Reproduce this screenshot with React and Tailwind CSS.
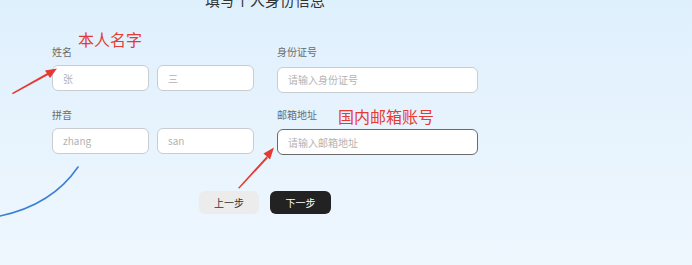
import React from "react";

function Field({ placeholder, focused }) {
  return (
    <input
      readOnly
      placeholder={placeholder}
      className={`h-[26px] w-full min-w-0 rounded-[6px] border bg-white px-[10px] text-[10px] outline-none placeholder:text-[#b3b3b3] ${
        focused ? "border-[#6b6b6b]" : "border-[#c9ccd1]"
      }`}
    />
  );
}

function Label({ children }) {
  return <div className="mb-[7px] text-[10px] leading-[12px] text-[#6b6b6b]">{children}</div>;
}

export default function App() {
  return (
    <div
      className="relative h-[265px] w-[692px] overflow-hidden bg-gradient-to-b from-[#dff0fd] to-[#eff7fe]"
      style={{ fontFamily: '"Noto Sans CJK SC", "Noto Sans", sans-serif' }}
    >
      <div className="ml-[52px] w-[426px]">
        <h1 className="-mt-[8px] text-center text-[15px] leading-[15px] text-[#333]">填写个人身份信息</h1>
        <div className="mt-[39px] grid grid-cols-[202px_201px] gap-x-[23px] gap-y-[16px]">
          <div>
            <Label>姓名</Label>
            <div className="flex gap-2">
              <Field placeholder="张" />
              <Field placeholder="三" />
            </div>
          </div>
          <div>
            <Label>身份证号</Label>
            <Field placeholder="请输入身份证号" />
          </div>
          <div>
            <Label>拼音</Label>
            <div className="flex gap-2">
              <Field placeholder="zhang" />
              <Field placeholder="san" />
            </div>
          </div>
          <div>
            <Label>邮箱地址</Label>
            <Field placeholder="请输入邮箱地址" focused />
          </div>
        </div>
        <div className="mt-[36px] flex justify-center gap-[11px]">
          <button className="h-[23px] w-[60px] rounded-[6px] bg-[#ececec] text-[10px] text-[#333]">上一步</button>
          <button className="h-[23px] w-[61px] rounded-[6px] bg-[#222] text-[10px] text-white">下一步</button>
        </div>
      </div>

      <div className="absolute left-[78px] top-[29px] text-[16px] leading-[20px] text-[#e53a32]">本人名字</div>
      <div className="absolute left-[338px] top-[106px] text-[16px] leading-[20px] text-[#e53a32]">国内邮箱账号</div>

      <svg className="pointer-events-none absolute left-0 top-0" width="692" height="265" viewBox="0 0 692 265">
        <polygon points="12,93 12.8,94.2 50,74 49,72" fill="#e53a32" />
        <polygon points="57,68.5 45,70.5 50,78" fill="#e53a32" />
        <polygon points="238,188 239.4,188.6 268,158 266.5,156.5" fill="#e53a32" />
        <polygon points="274,147.5 263.5,153.5 270,159.5" fill="#e53a32" />
        <path d="M78 167 Q 52 205 0 216" fill="none" stroke="#3d80d3" strokeWidth="1.6" strokeLinecap="round" />
      </svg>
    </div>
  );
}
